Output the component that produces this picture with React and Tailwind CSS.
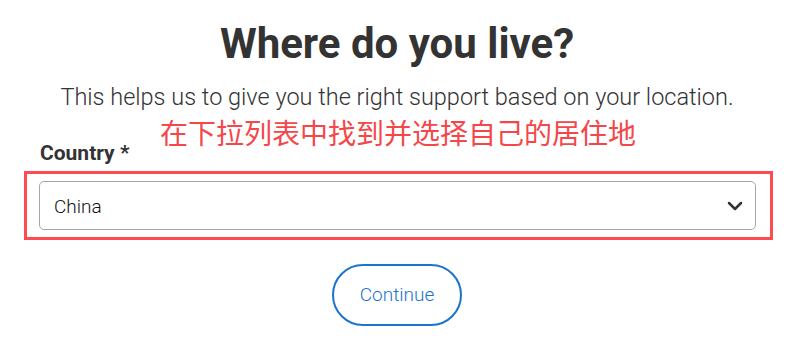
import {ChevronDown} from "lucide-react";

export const App = () => {
    return (
        <div className="w-[794px] h-[352px] bg-white flex flex-col items-center" style={{fontFamily: "Roboto, 'Noto Sans CJK SC', sans-serif"}}>
            <h1 className="mt-[18px] text-[42px] leading-[52px] font-bold text-[#333333]">Where do you live?</h1>
            <p className="mt-[12px] text-[23.5px] leading-[30px] font-light text-[#333333]">
                This helps us to give you the right support based on your location.
            </p>

            <div className="w-full relative">
                <div className="absolute left-[160px] top-[3px] text-[28px] leading-[34px] text-[#f5474a]" style={{fontFamily: "'Noto Sans CJK SC', sans-serif"}}>
                    在下拉列表中找到并选择自己的居住地
                </div>
                <label className="block ml-[40px] mt-[28px] text-[21px] leading-[26px] font-bold text-[#333333]">Country *</label>
                <div className="ml-[24px] mr-[21px] mt-[5px] border-[3px] border-[#ff4a4f] pt-[7px] pb-[7px] pl-[12px] pr-[14px]">
                    <div className="h-[49px] border border-[#a6a6a6] rounded-[5px] flex items-center justify-between pl-[14px] pr-[8px]">
                        <span className="mt-[3px] text-[19px] font-light text-[#111111]">China</span>
                        <ChevronDown className="w-[24px] h-[24px] text-[#333333]" strokeWidth={2.5}/>
                    </div>
                </div>
            </div>

            <button className="mt-[24px] w-[130px] h-[62px] rounded-full border-2 border-[#1a74cc] text-[19px] font-light text-[#1a74cc] bg-white">
                Continue
            </button>
        </div>
    )
}

export default App;
